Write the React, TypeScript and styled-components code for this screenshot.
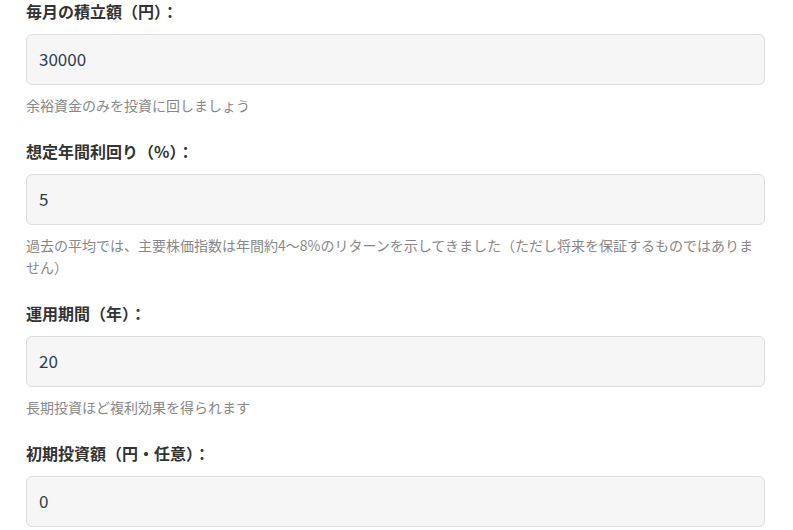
import React from "react";
import styled, { createGlobalStyle } from "styled-components";

const GlobalStyle = createGlobalStyle`
  html, body { margin: 0; padding: 0; background: #ffffff; }
  body { font-family: "Noto Sans CJK JP", "Noto Sans", sans-serif; }
  * { box-sizing: border-box; }
`;

const Form = styled.div`
  width: 793px;
  padding: 0 28px 0 26px;
  display: flex;
  flex-direction: column;
  gap: 24px;
`;

const Field = styled.div`
  display: flex;
  flex-direction: column;
`;

const Label = styled.label`
  display: block;
  font-size: 16px;
  font-weight: 700;
  line-height: 22px;
  color: #333333;
  margin-bottom: 12px;
`;

const Input = styled.input`
  width: 100%;
  height: 51px;
  padding: 0 12px 3px;
  border: 1px solid #dddddd;
  border-radius: 6px;
  background: #f6f6f6;
  font-family: "Noto Sans CJK JP", "Noto Sans", sans-serif;
  font-size: 17px;
  color: #2c3e50;
  outline: none;
`;

const Help = styled.small`
  display: block;
  margin-top: 9px;
  font-size: 14px;
  line-height: 22px;
  color: #888888;
`;

const fields = [
  { label: "毎月の積立額（円）：", value: "30000", help: "余裕資金のみを投資に回しましょう" },
  {
    label: "想定年間利回り（%）：",
    value: "5",
    help: "過去の平均では、主要株価指数は年間約4〜8%のリターンを示してきました（ただし将来を保証するものではありません）",
  },
  { label: "運用期間（年）：", value: "20", help: "長期投資ほど複利効果を得られます" },
  { label: "初期投資額（円・任意）：", value: "0", help: "" },
];

export default function App() {
  return (
    <>
      <GlobalStyle />
      <Form>
        {fields.map((f) => (
          <Field key={f.label}>
            <Label>{f.label}</Label>
            <Input type="text" defaultValue={f.value} readOnly />
            {f.help && <Help>{f.help}</Help>}
          </Field>
        ))}
      </Form>
    </>
  );
}
